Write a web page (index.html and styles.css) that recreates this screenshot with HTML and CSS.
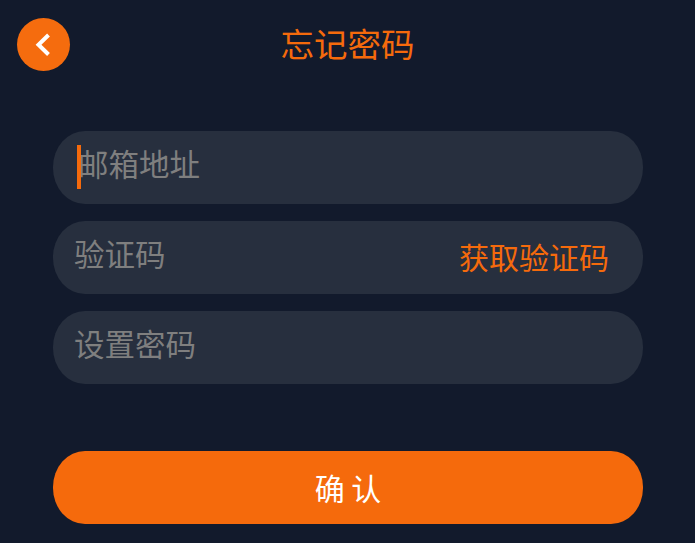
FILE: index.html
```html
<!DOCTYPE html>
<html lang="zh-CN">
<head>
    <meta charset="UTF-8" />
    <meta name="viewport" content="width=device-width, initial-scale=1.0" />
    <title>忘记密码</title>
    <link rel="stylesheet" href="styles.css">
</head>
<body>

<div class="header">
    <button class="back-btn" aria-label="返回">
        <svg width="53" height="53" viewBox="0 0 53 53">
            <path d="M31.5 17 L21.5 26.7 L31.5 36.5" fill="none" stroke="#fff" stroke-width="4" />
        </svg>
    </button>
    <div class="title">忘记密码</div>
</div>

<div class="form">
    <div class="field">
        <span class="caret"></span>
        <input class="field-input field-input-first" type="text" placeholder="邮箱地址">
    </div>
    <div class="field">
        <input class="field-input" type="text" placeholder="验证码">
        <span class="get-code">获取验证码</span>
    </div>
    <div class="field">
        <input class="field-input" type="password" placeholder="设置密码">
    </div>
    <button class="submit-btn">确 认</button>
</div>

</body>
</html>
```

FILE: styles.css
```css
* {
    box-sizing: border-box;
}

body {
    font-family: "Noto Sans CJK SC", "Liberation Sans", sans-serif;
    background-color: #121a2c;
    margin: 0;
    padding: 0;
    height: 543px;
    overflow: hidden;
}

.header {
    position: relative;
    display: flex;
    justify-content: center;
    height: 131px;
    padding-top: 16px;
}

.back-btn {
    position: absolute;
    left: 17px;
    top: 18px;
    width: 53px;
    height: 53px;
    padding: 0;
    border: none;
    border-radius: 50%;
    background-color: #f56c0e;
}

.back-btn svg {
    display: block;
}

.title {
    font-size: 33.5px;
    line-height: 53px;
    color: #f56a0c;
}

.form {
    display: flex;
    flex-direction: column;
    gap: 17px;
    margin: 0 52px 0 53px;
}

.field {
    position: relative;
    display: flex;
    align-items: center;
    height: 73px;
    padding: 0 34px 0 21px;
    border-radius: 32px / 36px;
    background-color: #272f3e;
}

.field-input {
    flex: 1;
    min-width: 0;
    height: 100%;
    padding: 0 0 9px;
    border: none;
    outline: none;
    background: transparent;
    font-family: inherit;
    font-size: 30.5px;
    color: #fff;
}

.field-input-first {
    padding-left: 4px;
}

.field-input::placeholder {
    color: #7f7f7f;
    opacity: 1;
}

.caret {
    position: absolute;
    left: 24px;
    top: 14px;
    width: 4px;
    height: 44px;
    background-color: #f56a0c;
}

.get-code {
    padding-bottom: 4px;
    font-size: 30px;
    color: #f56a0c;
}

.submit-btn {
    height: 73px;
    margin-top: 50px;
    padding-bottom: 2px;
    border: none;
    border-radius: 32px / 36px;
    background-color: #f56a0c;
    font-family: inherit;
    font-size: 30px;
    color: #fff;
}
```
